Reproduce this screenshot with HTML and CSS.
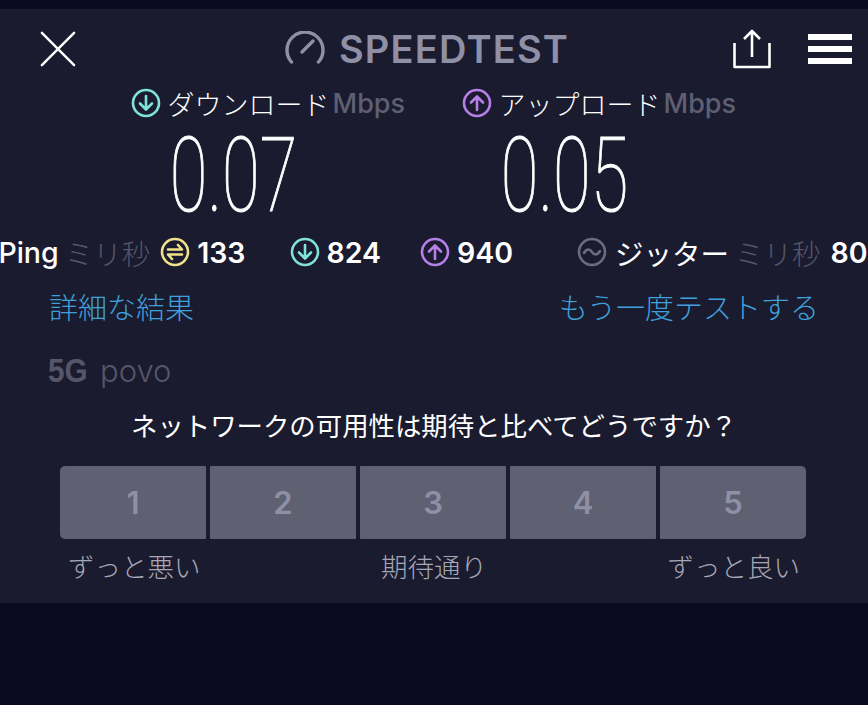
FILE: index.html
```html
<!DOCTYPE html>
<html lang="ja">
<head>
  <meta charset="UTF-8" />
  <title>Speedtest</title>
  <link rel="stylesheet" href="styles.css">
</head>
<body>
  <div class="panel">
    <header class="topbar">
      <svg class="icon-close" viewBox="0 0 38 38"><path d="M2 2 L36 36 M36 2 L2 36"/></svg>
      <div class="brand">
        <svg class="icon-gauge" viewBox="0 0 40 36"><path d="M6.500 31 A18 18 0 1 1 33.500 31"/><path d="M17 21 L28 10"/></svg>
        <span>SPEEDTEST</span>
      </div>
      <div class="top-actions">
        <svg class="icon-share" viewBox="0 0 38 40"><path d="M1.500 14 V38 H36.500 V14"/><path d="M19 28 V3 M11 10 L19 2 L27 10"/></svg>
        <div class="burger"><i></i><i></i><i></i></div>
      </div>
    </header>

    <section class="speeds">
      <div class="speed">
        <div class="speed-label">
          <svg class="dot teal" viewBox="0 0 30 30"><circle cx="15" cy="15" r="13"/><path d="M15 8 V21 M9 15.500 L15 21.500 L21 15.500"/></svg>
          <span>ダウンロード</span><em>Mbps</em>
        </div>
        <div class="speed-value"><span>0.07</span></div>
      </div>
      <div class="speed">
        <div class="speed-label">
          <svg class="dot purple" viewBox="0 0 30 30"><circle cx="15" cy="15" r="13"/><path d="M15 22 V9 M9 14.500 L15 8.500 L21 14.500"/></svg>
          <span>アップロード</span><em>Mbps</em>
        </div>
        <div class="speed-value"><span>0.05</span></div>
      </div>
    </section>

    <div class="stats">
      <span class="stat-name">Ping</span><span class="unit">ミリ秒</span>
      <svg class="dot yellow" viewBox="0 0 30 30"><circle cx="15" cy="15" r="13"/><path d="M8 12.500 H22 L18 8 M22 17.500 H8 L12 22"/></svg>
      <b class="num first">133</b>
      <svg class="dot teal" viewBox="0 0 30 30"><circle cx="15" cy="15" r="13"/><path d="M15 8 V21 M9 15.500 L15 21.500 L21 15.500"/></svg>
      <b class="num second">824</b>
      <svg class="dot purple" viewBox="0 0 30 30"><circle cx="15" cy="15" r="13"/><path d="M15 22 V9 M9 14.500 L15 8.500 L21 14.500"/></svg>
      <b class="num third">940</b>
      <svg class="dot grey" viewBox="0 0 30 30"><circle cx="15" cy="15" r="13"/><path d="M7 16 C10 11 13 12 15 15 C17 18 20 19 23 14"/></svg>
      <span class="stat-jp">ジッター</span><span class="unit">ミリ秒</span>
      <b class="num last">80</b>
    </div>

    <div class="links">
      <a>詳細な結果</a>
      <a>もう一度テストする</a>
    </div>

    <div class="carrier"><b>5G</b><span>povo</span></div>

    <p class="question">ネットワークの可用性は期待と比べてどうですか？</p>

    <div class="rating">
      <div class="rate">1</div>
      <div class="rate">2</div>
      <div class="rate">3</div>
      <div class="rate">4</div>
      <div class="rate">5</div>
    </div>
    <div class="rating-labels">
      <span>ずっと悪い</span>
      <span>期待通り</span>
      <span>ずっと良い</span>
    </div>
  </div>
</body>
</html>
```

FILE: styles.css
```css
html, body {
  height: 100%;
}
body {
  margin: 0;
  background: #0a0b20;
  font-family: "Inter", "Noto Sans CJK JP", sans-serif;
  color: #fff;
  overflow: hidden;
}
.panel {
  margin-top: 9px;
  height: 594px;
  background: #1a1b2e;
  box-sizing: border-box;
  overflow: hidden;
}
svg {
  fill: none;
  stroke-linecap: round;
  stroke-linejoin: round;
}

/* top bar */
.topbar {
  height: 80px;
  margin-bottom: -1px;
  padding: 0 16px 0 40px;
  display: flex;
  align-items: center;
  justify-content: space-between;
}
.icon-close {
  width: 36px;
  height: 36px;
  stroke: #fff;
  stroke-width: 2.6;
}
.brand {
  display: flex;
  align-items: center;
  gap: 14px;
  margin-left: 45px;
  color: #8f90a6;
  font-size: 38px;
  font-weight: 600;
  letter-spacing: 1.2px;
}
.icon-gauge {
  width: 40px;
  height: 36px;
  stroke: #8f90a6;
  stroke-width: 3.4;
}
.top-actions {
  display: flex;
  align-items: center;
  gap: 37px;
}
.icon-share {
  width: 38px;
  height: 40px;
  stroke: #fff;
  stroke-width: 2.6;
  stroke-linecap: butt;
}
.burger {
  width: 44px;
  display: flex;
  flex-direction: column;
  gap: 6px;
}
.burger i {
  height: 6px;
  background: #fff;
}

/* download / upload */
.speeds {
  display: flex;
  justify-content: center;
  gap: 58px;
  padding-left: 1px;
}
.speed {
  width: 273px;
}
.speed-label {
  display: flex;
  align-items: center;
  height: 30px;
  margin-left: -2px;
  font-size: 27px;
  font-weight: 300;
  white-space: nowrap;
}
.speed-label em {
  font-style: normal;
  font-weight: 500;
  color: #5e5f73;
  margin-left: 3px;
}
.speed-label .dot {
  margin-right: 7px;
}
.speed-value {
  margin-top: 12px;
  padding-right: 70px;
  text-align: center;
  font-family: "Roboto", sans-serif;
  font-weight: 100;
  font-size: 104px;
  line-height: 92px;
  -webkit-text-stroke: 1px #fff;
}
.speed-value span {
  display: inline-block;
  transform: scaleX(0.66);
}
.dot {
  width: 30px;
  height: 30px;
  flex: none;
  stroke-width: 2.6;
}
.dot.teal { stroke: #7fe3dc; }
.dot.purple { stroke: #b77fe8; }
.dot.yellow { stroke: #f2e08a; }
.dot.grey { stroke: #6b6c7e; }

/* ping row */
.stats {
  display: flex;
  align-items: center;
  justify-content: center;
  white-space: nowrap;
  margin-top: 12px;
  height: 36px;
  font-size: 28.500px;
}
.stat-name {
  font-weight: 500;
}
.stat-jp {
  font-weight: 400;
  margin-left: 8px;
}
.unit {
  color: #55566a;
  font-weight: 300;
  margin: 0 10px 0 6px;
}
.num {
  font-weight: 600;
  margin-left: 7px;
}
.num.first { margin-right: 44px; }
.num.second { margin-right: 39px; }
.num.third { margin-right: 64px; }
.num.last { margin: 0 2px 0 0; }

/* links */
.links {
  display: flex;
  justify-content: space-between;
  padding: 0 49px;
  margin-top: 21px;
  line-height: 36px;
  color: #3fa0dc;
  font-size: 29px;
  font-weight: 300;
}

/* carrier */
.carrier {
  display: flex;
  align-items: baseline;
  gap: 8px;
  padding-left: 48px;
  margin-top: 26px;
  line-height: 36px;
  color: #55566a;
}
.carrier b {
  font-family: "Liberation Sans", sans-serif;
  font-size: 33px;
  font-weight: 700;
  transform: scaleX(0.9);
  transform-origin: left;
}
.carrier span {
  font-size: 31px;
  font-weight: 300;
}

/* rating */
.question {
  margin: 19px 0 0;
  line-height: 36px;
  text-align: center;
  font-size: 26.400px;
  font-weight: 400;
}
.rating {
  display: flex;
  gap: 4px;
  margin: 22px 62px 0 60px;
}
.rate {
  flex: 1;
  height: 73px;
  display: flex;
  align-items: center;
  justify-content: center;
  background: #5f6072;
  color: #8f90a6;
  font-size: 31px;
  font-weight: 600;
  border-radius: 1px;
}
.rate:first-child {
  border-radius: 5px 1px 1px 5px;
}
.rate:last-child {
  border-radius: 1px 5px 5px 1px;
}
.rating-labels {
  display: flex;
  justify-content: space-between;
  margin-top: 10px;
  line-height: 36px;
  padding: 0 68px;
  color: #a6a7b5;
  font-size: 26.500px;
  font-weight: 300;
}
```
